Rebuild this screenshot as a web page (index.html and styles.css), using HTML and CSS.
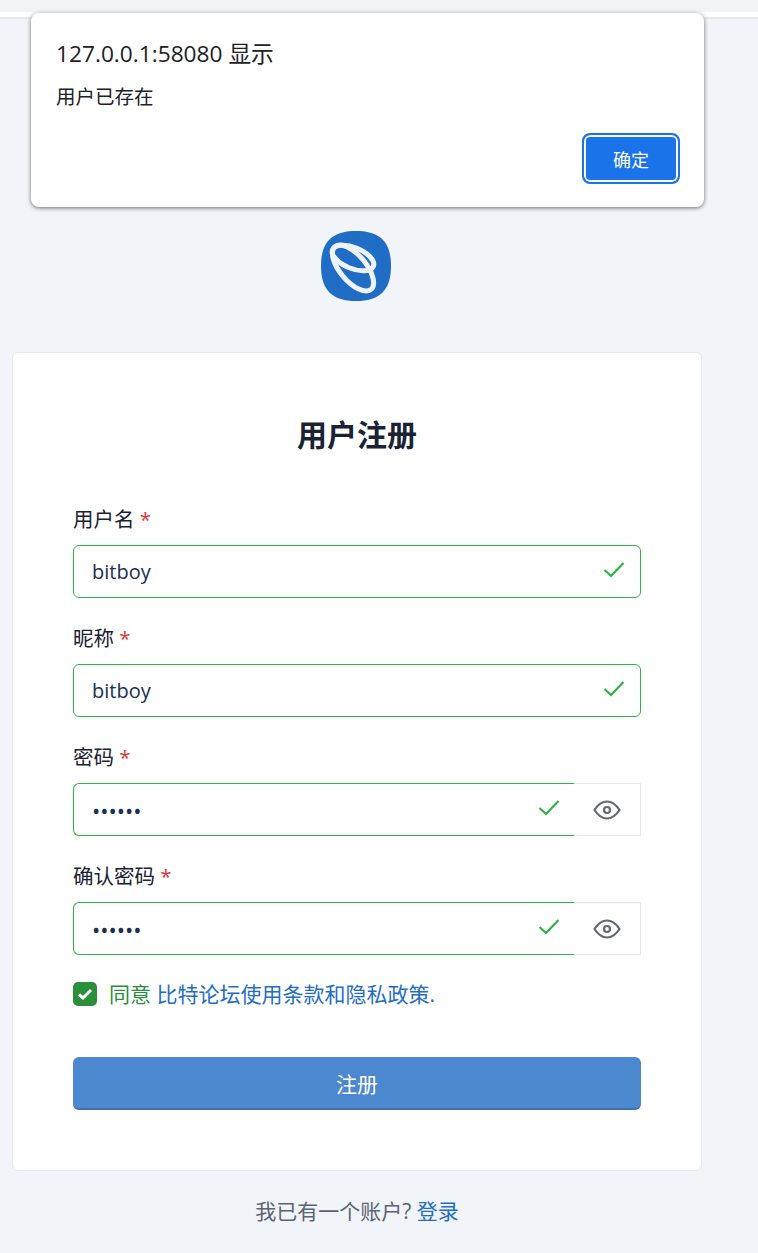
FILE: index.html
```html
<!DOCTYPE html>
<html lang="zh-CN">
<head>
    <meta charset="UTF-8">
    <meta name="viewport" content="width=device-width, initial-scale=1.0">
    <title>用户注册</title>
    <link rel="stylesheet" href="styles.css">
</head>
<body>
    <div class="topbar"></div>

    <!-- browser alert -->
    <div class="dialog">
        <div class="dialog-title">127.0.0.1:58080 显示</div>
        <div class="dialog-msg">用户已存在</div>
        <div class="dialog-foot">
            <button class="dialog-btn" type="button">确定</button>
        </div>
    </div>

    <div class="page">
        <div class="logo">
            <svg width="70" height="70" viewBox="0 0 70 70">
                <path class="logo-bg" d="M35 0C58 0 70 10 70 35C70 60 58 70 35 70C12 70 0 60 0 35C0 10 12 0 35 0Z"/>
                <g class="logo-ring">
                    <ellipse cx="32" cy="27" rx="22" ry="10.500" transform="rotate(22 32 27)"/>
                    <ellipse cx="32" cy="37" rx="28" ry="13" transform="rotate(50 32 37)"/>
                </g>
            </svg>
        </div>

        <div class="card">
            <h2>用户注册</h2>
            <form>
                <div class="f-group">
                    <label for="fusername">用户名 <span class="req">*</span></label>
                    <div class="input-wrap">
                        <input type="text" id="fusername" value="bitboy">
                        <svg class="check" width="24" height="24" viewBox="0 0 24 24"><path d="M2.500 12L9 18L21.500 5"/></svg>
                    </div>
                </div>
                <div class="f-group">
                    <label for="fnickname">昵称 <span class="req">*</span></label>
                    <div class="input-wrap">
                        <input type="text" id="fnickname" value="bitboy">
                        <svg class="check" width="24" height="24" viewBox="0 0 24 24"><path d="M2.500 12L9 18L21.500 5"/></svg>
                    </div>
                </div>
                <div class="f-group">
                    <label for="fpassword">密码 <span class="req">*</span></label>
                    <div class="input-wrap has-eye">
                        <input type="password" id="fpassword" value="123456">
                        <svg class="check" width="24" height="24" viewBox="0 0 24 24"><path d="M2.500 12L9 18L21.500 5"/></svg>
                        <span class="eye">
                            <svg width="28" height="20" viewBox="0 0 28 20"><path d="M1.500 10C5 4.500 9 1.500 14 1.500S23 4.500 26.500 10C23 15.500 19 18.500 14 18.500S5 15.500 1.500 10Z"/><circle cx="14" cy="10" r="3"/></svg>
                        </span>
                    </div>
                </div>
                <div class="f-group">
                    <label for="fconfirm">确认密码 <span class="req">*</span></label>
                    <div class="input-wrap has-eye">
                        <input type="password" id="fconfirm" value="123456">
                        <svg class="check" width="24" height="24" viewBox="0 0 24 24"><path d="M2.500 12L9 18L21.500 5"/></svg>
                        <span class="eye">
                            <svg width="28" height="20" viewBox="0 0 28 20"><path d="M1.500 10C5 4.500 9 1.500 14 1.500S23 4.500 26.500 10C23 15.500 19 18.500 14 18.500S5 15.500 1.500 10Z"/><circle cx="14" cy="10" r="3"/></svg>
                        </span>
                    </div>
                </div>
                <div class="agree">
                    <span class="checkbox">
                        <svg width="16" height="14" viewBox="0 0 16 14"><path d="M2 7.500L6 11L14 3"/></svg>
                    </span>
                    <span class="agree-text">同意 <a href="#">比特论坛使用条款和隐私政策.</a></span>
                </div>
                <button class="submit" type="button">注册</button>
            </form>
        </div>

        <p class="login-link">我已有一个账户? <a href="#">登录</a></p>
    </div>
</body>
</html>
```

FILE: styles.css
```css
* {
    box-sizing: border-box;
}
body {
    margin: 0;
    background-color: #f1f4f9;
    font-family: "Open Sans", "Noto Sans CJK SC", sans-serif;
    color: #1a2233;
}
.topbar {
    height: 19px;
    background-color: #fff;
    border-top: 12px solid #f1f3f5;
    border-bottom: 2px solid #e6e8eb;
}

/* alert */
.dialog {
    position: absolute;
    left: 31px;
    top: 13px;
    width: 673px;
    height: 194px;
    padding: 25px 24px 0 25px;
    background-color: #fff;
    border-radius: 8px;
    box-shadow: 0 1px 4px rgba(0, 0, 0, 0.55);
    color: #202124;
}
.dialog-title {
    font-size: 22.700px;
    line-height: 32px;
}
.dialog-msg {
    margin-top: 13px;
    font-size: 19.500px;
    line-height: 28px;
}
.dialog-foot {
    display: flex;
    justify-content: flex-end;
    margin-top: 22px;
}
.dialog-btn {
    width: 98px;
    height: 51px;
    background-color: #1a73e8;
    color: #fff;
    border: 2px solid #1a73e8;
    box-shadow: inset 0 0 0 2px #fff;
    border-radius: 8px;
    font-family: inherit;
    font-size: 18px;
}

/* page */
.page {
    width: 690px;
    margin-left: 12px;
}
.logo {
    display: flex;
    justify-content: center;
    padding: 212px 2px 0 0;
    height: 333px;
}
.logo-bg {
    fill: #1f6dc4;
}
.logo-ring ellipse {
    fill: none;
    stroke: #eef3fa;
    stroke-width: 5;
}
.card {
    height: 819px;
    padding: 59px 60px 0;
    background-color: #fff;
    border: 1px solid #e4e7ec;
    border-radius: 6px;
}
h2 {
    margin: 0 0 46px;
    text-align: center;
    font-size: 30px;
    line-height: 46px;
    font-weight: 700;
}
.f-group {
    margin-bottom: 25px;
}
label {
    display: block;
    font-size: 20.500px;
    line-height: 30px;
    margin-bottom: 11px;
}
.req {
    color: #d63939;
}
.input-wrap {
    position: relative;
    height: 53px;
}
.input-wrap input {
    width: 100%;
    height: 53px;
    padding: 0 50px 0 18px;
    border: 1px solid #2fb344;
    border-radius: 6px;
    background-color: #fff;
    color: #1a2f52;
    font-family: inherit;
    font-size: 20px;
}
.has-eye input {
    width: 501px;
    border-right: 0;
    border-radius: 6px 0 0 6px;
    font-size: 22px;
}
.check {
    position: absolute;
    right: 15px;
    top: 13px;
    fill: none;
    stroke: #2fb344;
    stroke-width: 2.200;
}
.has-eye .check {
    right: 80px;
}
.eye {
    position: absolute;
    right: 0;
    top: 0;
    width: 67px;
    height: 53px;
    display: flex;
    align-items: center;
    justify-content: center;
    border: 1px solid #e6e7e9;
    border-left: 0;
}
.eye svg {
    fill: none;
    stroke: #626976;
    stroke-width: 2.200;
}
.agree {
    display: flex;
    align-items: center;
    gap: 12px;
}
.checkbox {
    width: 24px;
    height: 24px;
    display: flex;
    align-items: center;
    justify-content: center;
    background-color: #2a8f3a;
    border-radius: 5px;
}
.checkbox svg {
    fill: none;
    stroke: #fff;
    stroke-width: 3;
}
.agree-text {
    font-size: 21px;
    line-height: 28px;
    color: #2a8f3a;
}
a {
    color: #1f6dc4;
    text-decoration: none;
}
.submit {
    display: block;
    width: 100%;
    height: 53px;
    margin-top: 49px;
    background-color: #4c88d0;
    color: #fff;
    border: 0;
    border-bottom: 2px solid #3f72b0;
    border-radius: 6px;
    font-family: inherit;
    font-size: 21px;
}
.login-link {
    margin: 24px 0 0;
    text-align: center;
    font-size: 21px;
    line-height: 32px;
    color: #5b6472;
}
```
